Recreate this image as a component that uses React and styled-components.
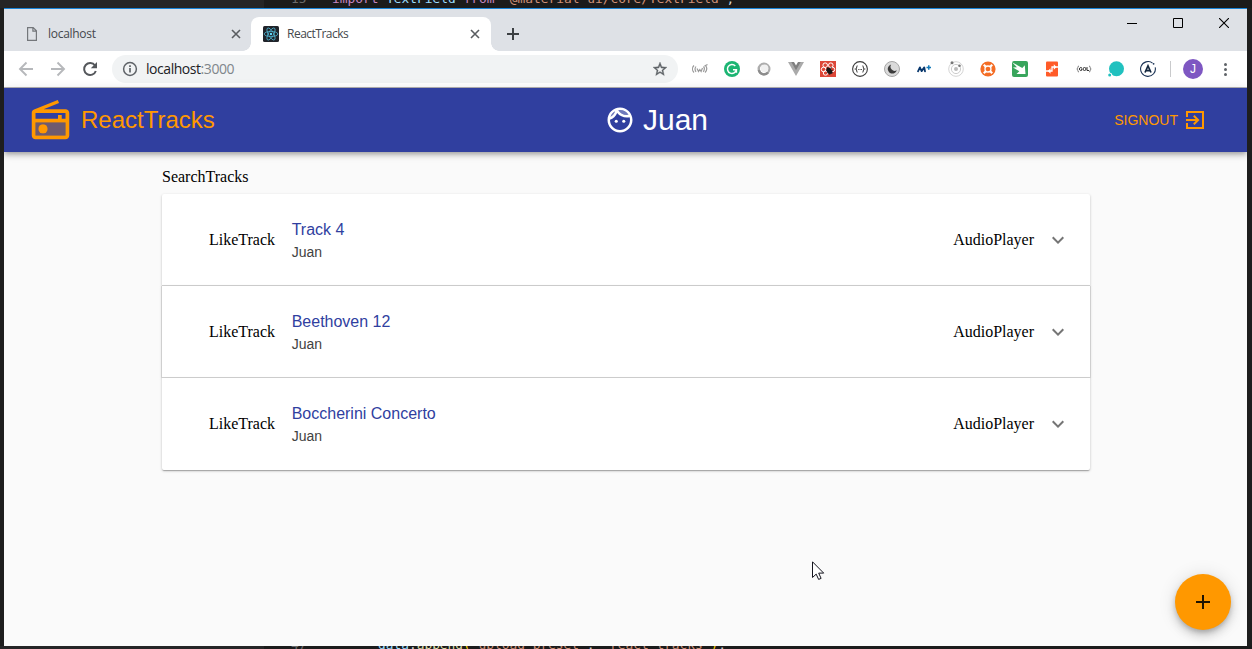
import React from "react";
import styled, { createGlobalStyle } from "styled-components";

const Global = createGlobalStyle`
  html, body { margin: 0; padding: 0; overflow: hidden; background: #1e1e1e; }
  * { box-sizing: border-box; }
  svg { display: block; flex: none; }
`;

const SANS = '"Liberation Sans", Arial, sans-serif';
const SERIF = '"Liberation Serif", "Times New Roman", serif';
const UI = '"Open Sans", "Noto Sans", sans-serif';

const Desktop = styled.div`
  width: 1252px;
  height: 649px;
  display: flex;
  flex-direction: column;
  overflow: hidden;
  background: #1e1e1e;
`;

const CodeStrip = styled.div`
  flex: none;
  height: ${(p) => p.$height}px;
  padding-left: 264px;
  display: flex;
  align-items: flex-start;
  overflow: hidden;
  background: linear-gradient(90deg, #252526 264px, #1b1b1b 264px);
`;

const CodeLine = styled.div`
  flex: none;
  display: flex;
  margin-top: ${(p) => p.$shift || 0}px;
  font: 12.85px/16px "DejaVu Sans Mono", monospace;
  white-space: pre;
`;

const LineNumber = styled.span`
  padding-left: 27px;
  width: ${(p) => p.$width}px;
  color: #6b6b6b;
`;

const Token = styled.span`
  color: ${(p) => p.$color};
`;

const BrowserWindow = styled.div`
  flex: none;
  width: 1243px;
  height: 638px;
  margin-left: 4px;
  display: flex;
  flex-direction: column;
  overflow: hidden;
  border-top: 1px solid #1883d7;
  background: #fff;
`;

const TabStrip = styled.div`
  flex: none;
  height: 42px;
  display: flex;
  background: #dee1e6;
`;

const Tab = styled.div`
  position: relative;
  width: ${(p) => (p.$active ? 240 : 247)}px;
  height: 34px;
  margin-top: 8px;
  padding: ${(p) => (p.$active ? "0 11px 0 12px" : "0 10px 0 20px")};
  display: flex;
  align-items: center;
  background: ${(p) => (p.$active ? "#fff" : "transparent")};
  border-radius: 8px 8px 0 0;
  ${(p) =>
    p.$active &&
    `&::before, &::after {
      content: "";
      position: absolute;
      bottom: 0;
      width: 8px;
      height: 8px;
    }
    &::before { left: -8px; background: radial-gradient(circle at 0 0, transparent 7.5px, #fff 8px); }
    &::after { right: -8px; background: radial-gradient(circle at 100% 0, transparent 7.5px, #fff 8px); }`}
`;

const TabTitle = styled.span`
  flex: 1;
  margin-left: 8px;
  font: 12px/16px ${UI};
  letter-spacing: ${(p) => p.$spacing}px;
  color: #45484c;
`;

const NewTab = styled.div`
  width: 44px;
  height: 34px;
  margin-top: 8px;
  display: grid;
  place-items: center;
`;

const WindowControls = styled.div`
  margin-left: auto;
  height: 27px;
  display: flex;
`;

const WindowButton = styled.div`
  width: 46px;
  display: grid;
  place-items: center;
`;

const Toolbar = styled.div`
  flex: none;
  height: 37px;
  padding-left: 14px;
  display: flex;
  align-items: center;
  background: #fff;
  border-bottom: 1px solid #b6b4b6;
`;

const NavButtons = styled.div`
  display: flex;
  gap: 16px;
  width: 94px;
`;

const AddressBar = styled.div`
  width: 566px;
  height: 28px;
  padding: 0 10px;
  display: flex;
  align-items: center;
  border-radius: 14px;
  background: #f1f3f4;
`;

const Address = styled.span`
  flex: 1;
  margin-left: 8px;
  font: 14px/20px ${UI};
  letter-spacing: -0.45px;
  color: #202124;
  span { color: #80868b; }
`;

const Extensions = styled.div`
  margin-left: 14px;
  display: flex;
  gap: 16px;
`;

const Separator = styled.div`
  width: 1px;
  height: 16px;
  margin: 0 12px 0 14px;
  background: #c9cacc;
`;

const Avatar = styled.div`
  width: 20px;
  height: 20px;
  display: grid;
  place-items: center;
  border-radius: 50%;
  background: #7e57c2;
  color: #fff;
  font: 12px/20px ${SANS};
`;

const MenuDots = styled.div`
  margin-left: 20.5px;
  display: grid;
  gap: 2px;
  i { width: 3px; height: 3px; border-radius: 50%; background: #5f6368; }
`;

const Page = styled.main`
  flex: 1;
  display: flex;
  flex-direction: column;
  position: relative;
  background: #fafafa;
`;

const AppBar = styled.header`
  flex: none;
  height: 64px;
  padding: 0 40px 0 24px;
  display: grid;
  grid-template-columns: 575px 1fr auto;
  align-items: center;
  background: #303f9f;
  box-shadow: 0 2px 4px -1px rgba(0,0,0,.2), 0 4px 5px rgba(0,0,0,.14), 0 1px 10px rgba(0,0,0,.12);
  font-family: ${SANS};
`;

const Brand = styled.div`
  display: flex;
  align-items: center;
  gap: 8px;
  font-size: 24px;
  color: #ff9800;
`;

const UserName = styled.div`
  display: flex;
  align-items: center;
  gap: 8px;
  padding-left: 2px;
  font-size: 30px;
  color: #fff;
`;

const SignOut = styled.div`
  display: flex;
  align-items: center;
  gap: 5px;
  font-size: 14px;
  color: #ff9800;
`;

const Content = styled.section`
  width: 928px;
  margin: 16px 0 0 158px;
  font: 16px/18px ${SERIF};
  color: #000;
`;

const TrackList = styled.div`
  margin-top: 8px;
`;

const TrackPanel = styled.article`
  position: relative;
  height: 92px;
  padding: 1px 20px 0 47px;
  display: flex;
  align-items: center;
  background: #fff;
  border-bottom: 1px solid ${(p) => (p.$last ? "#fff" : "#d2d2d2")};
  border-radius: ${(p) => (p.$first ? "2px 2px 0 0" : p.$last ? "0 0 2px 2px" : 0)};
  box-shadow: 0 1px 3px rgba(0,0,0,.2), 0 1px 1px rgba(0,0,0,.14), 0 2px 1px -1px rgba(0,0,0,.12)
    ${(p) => (!p.$first && !p.$last ? ", -1px 0 0 rgba(0,0,0,.08), 1px 0 0 rgba(0,0,0,.08)" : "")};
`;

const TrackText = styled.div`
  flex: 1;
  margin-left: 16.6px;
  font-family: ${SANS};
`;

const TrackTitle = styled.div`
  font-size: 16px;
  line-height: 24px;
  color: #303f9f;
`;

const TrackAuthor = styled.div`
  font-size: 14px;
  line-height: 21px;
  color: #424242;
`;

const Expand = styled.div`
  margin-left: 12px;
`;

const Fab = styled.div`
  position: absolute;
  right: 16px;
  bottom: 16px;
  width: 56px;
  height: 56px;
  display: grid;
  place-items: center;
  border-radius: 50%;
  background: #ff9800;
  box-shadow: 0 3px 5px -1px rgba(0,0,0,.2), 0 6px 10px rgba(0,0,0,.14), 0 1px 18px rgba(0,0,0,.12);
`;

const Pointer = styled.svg`
  position: absolute;
  left: 808px;
  top: 473px;
`;

const Icon = ({ size = 16, color = "currentColor", children, box = 24 }) => (
  <svg width={size} height={size} viewBox={`0 0 ${box} ${box}`} fill={color}>{children}</svg>
);

const Ext = ({ children }) => (
  <svg width="16" height="16" viewBox="0 0 16 16" fill="none">{children}</svg>
);

const CloseTab = () => (
  <svg width="10" height="10" viewBox="0 0 10 10" stroke="#5a5d61" strokeWidth="1.6"><path d="M1 1l8 8M9 1L1 9" /></svg>
);

const ReactBadge = () => (
  <svg width="16" height="16" viewBox="0 0 16 16" fill="none" stroke="#4fb3cf" strokeWidth=".8">
    <rect width="16" height="16" rx="1.5" fill="#20232a" stroke="none" />
    <ellipse cx="8" cy="8" rx="6.8" ry="2.6" />
    <ellipse cx="8" cy="8" rx="6.8" ry="2.6" transform="rotate(60 8 8)" />
    <ellipse cx="8" cy="8" rx="6.8" ry="2.6" transform="rotate(120 8 8)" />
    <circle cx="8" cy="8" r="1.2" fill="#61dafb" stroke="none" />
  </svg>
);

const ExtensionIcons = () => (
  <Extensions>
    <Ext>
      <g stroke="#9a9a9a" strokeWidth="1.2">
        <path d="M2 4.5C0 6.5 0 9.500 2 11.500M4 5.500C2.800 7 2.800 9 4 10.800" />
        <path d="M13.500 4.500C15 6.500 15 9.500 13 11.500M11.500 5.500C12.800 7 12.500 9 11.300 10.800M12.500 5l3-1.500" />
        <path d="M5 7.500l1.500 3 1.300-2 1.300 2 1.400-3.500" />
      </g>
    </Ext>
    <Ext>
      <circle cx="8" cy="8" r="8" fill="#1cb573" />
      <path d="M11.300 4.900A4.500 4.500 0 1 0 12.400 8.700H9M12.400 8.700v3" stroke="#fff" strokeWidth="1.5" />
    </Ext>
    <Ext>
      <circle cx="8" cy="8" r="5.300" stroke="#adadad" strokeWidth="2.400" />
      <path d="M2.800 9a5.300 5.300 0 0 0 9.200 2.500" stroke="#8c8c8c" strokeWidth="2.300" />
      <circle cx="8.500" cy="7.300" r="3.900" fill="#f0f0f0" />
    </Ext>
    <Ext>
      <path d="M0 1h5l3 5.300L11 1h5L8 15z" fill="#aaa" />
      <path d="M3.300 1H6l2 3.500L10 1h2.700L8 9.200z" fill="#7f7f7f" />
    </Ext>
    <Ext>
      <rect width="16" height="16" fill="#dc4738" />
      <g stroke="#fff" strokeWidth="1">
        <circle cx="5.200" cy="4.200" r="2.300" /><circle cx="10.800" cy="4.200" r="2.300" />
        <circle cx="3.600" cy="8.500" r="2.300" /><circle cx="12.400" cy="8.500" r="2.300" />
        <circle cx="5.500" cy="12" r="2.200" />
      </g>
      <ellipse cx="9.300" cy="9.800" rx="2.400" ry="3.400" transform="rotate(-35 9.300 9.800)" fill="#161616" />
      <path d="M6 9.500l6-3M7 12l6-3M9 13.500l4-2M7 6l1 2" stroke="#161616" strokeWidth=".8" />
    </Ext>
    <Ext>
      <circle cx="8" cy="8" r="7.400" stroke="#3d3d3d" strokeWidth="1.100" />
      <path d="M5.600 4.800c-1.500 0-.3 2.700-1.900 3.200 1.600.5.400 3.200 1.900 3.200M10.400 4.800c1.500 0 .3 2.700 1.900 3.200-1.600.5-.4 3.200-1.900 3.200" stroke="#444" strokeWidth="1.100" />
      <path d="M6.200 8.500h1M7.600 8.500h1M9 8.500h1" stroke="#555" />
    </Ext>
    <Ext>
      <circle cx="8" cy="8" r="7.500" fill="#dadada" stroke="#a6a6a6" />
      <path d="M7.200 3.500A4.600 4.600 0 1 0 12.800 9.200 4.100 4.100 0 0 1 7.200 3.500z" fill="#3c3c3c" />
    </Ext>
    <Ext>
      <path d="M2 10.300L3.900 6.400l1.700 3.700 2.700-3.700.7 3.900" stroke="#07366c" strokeWidth="1.800" strokeLinejoin="round" strokeLinecap="round" />
      <path d="M10.500 6.500h4.500M12.750 4.250v4.500" stroke="#1379b9" strokeWidth="1.500" />
    </Ext>
    <Ext>
      <circle cx="8" cy="8" r="7.300" stroke="#d4d4d4" /><circle cx="8" cy="8" r="4.600" stroke="#ccc" />
      <circle cx="8" cy="8" r="2" fill="#bbb" />
      <circle cx="4" cy="1.800" r="1.500" fill="#777" /><circle cx="11.500" cy="4.800" r="1.300" fill="#777" />
    </Ext>
    <Ext>
      <circle cx="8" cy="8" r="7.600" fill="#f46d25" />
      <circle cx="8" cy="8" r="3" stroke="#fff" strokeWidth="1.300" />
      <path d="M3.800 3.800l2 2M12.200 3.800l-2 2M3.800 12.200l2-2M12.200 12.200l-2-2" stroke="#fff" strokeWidth="2.200" />
    </Ext>
    <Ext>
      <rect width="16" height="16" rx="2" fill="#38a55c" />
      <path d="M0 1.200L10.300 7l2.500-2.700L13.500 13 4.500 13l2.800-2.700L1 6.500l4-.2z" fill="#fff" />
    </Ext>
    <Ext>
      <rect x="2" y=".5" width="12" height="15" rx="1" fill="#ff5b28" />
      <path d="M2 10h6V6h6" stroke="#fff" strokeWidth="1.300" />
      <path d="M6.500 7.300v5.400L3.800 10zM9.800 3.300v5.400L12.500 6z" fill="#fff" />
    </Ext>
    <Ext>
      <path d="M3 5C1 5 2.500 8 .8 8 2.500 8 1 11 3 11M13 5c2 0 .5 3 2.200 3-1.700 0-.2 3-2.200 3" stroke="#777" />
      <path d="M5.800 6.800a1.500 1.500 0 1 0 0 2.400V8H5M11 6v3.500h2" stroke="#333" />
      <circle cx="8.500" cy="8" r="1.500" stroke="#333" />
    </Ext>
    <Ext>
      <circle cx="8.500" cy="7.800" r="7.500" fill="#20c1bf" />
      <circle cx="1.900" cy="14" r="2.300" fill="#fff" /><circle cx="1.700" cy="14" r="1.500" fill="#20c1bf" />
    </Ext>
    <Ext>
      <path d="M12.500 2.100A7.400 7.400 0 1 0 15.200 6.300" stroke="#1d3557" strokeWidth="1.100" />
      <circle cx="13.600" cy="2.800" r=".9" fill="#1d3557" />
      <path d="M5 11.500L8 4.800l3 6.700M6.200 9.600h3.600" stroke="#14283f" strokeWidth="1.700" />
    </Ext>
  </Extensions>
);

const TRACKS = ["Track 4", "Beethoven 12", "Boccherini Concerto"];

export default function App() {
  return (
    <Desktop>
      <Global />
      <CodeStrip $height={8}>
        <CodeLine $shift={-9}>
          <LineNumber $width={68}>15</LineNumber>
          <Token $color="#c586c0">import </Token>
          <Token $color="#9cdcfe">TextField </Token>
          <Token $color="#c586c0">from </Token>
          <Token $color="#ce9178">'@material-ui/core/TextField'</Token>
          <Token $color="#d4d4d4">;</Token>
        </CodeLine>
      </CodeStrip>
      <BrowserWindow>
        <TabStrip>
          <Tab>
            <svg width="16" height="16" viewBox="0 0 16 16" fill="none" stroke="#74777b" strokeWidth="1.200">
              <path d="M3.600 1.600h5.600l3.200 3.200v9.600H3.600zM8.900 1.600v3.500h3.500" />
            </svg>
            <TabTitle $spacing={-0.28}>localhost</TabTitle>
            <CloseTab />
          </Tab>
          <Tab $active>
            <ReactBadge />
            <TabTitle $spacing={-0.5}>ReactTracks</TabTitle>
            <CloseTab />
          </Tab>
          <NewTab>
            <svg width="12" height="12" viewBox="0 0 12 12" stroke="#3c4043" strokeWidth="2"><path d="M6 0v12M0 6h12" /></svg>
          </NewTab>
          <WindowControls>
            <WindowButton><svg width="10" height="10"><path d="M0 5.500h10" stroke="#000" /></svg></WindowButton>
            <WindowButton><svg width="10" height="10"><path d="M.5.500h9v9h-9z" fill="none" stroke="#000" /></svg></WindowButton>
            <WindowButton><svg width="10" height="10"><path d="M0 0l10 10M10 0L0 10" stroke="#000" strokeWidth="1.100" /></svg></WindowButton>
          </WindowControls>
        </TabStrip>
        <Toolbar>
          <NavButtons>
            <svg width="16" height="16" fill="none" stroke="#b6b8bb" strokeWidth="1.900"><path d="M15 8H2M8.500 1.500L2 8l6.500 6.500" /></svg>
            <svg width="16" height="16" fill="none" stroke="#b6b8bb" strokeWidth="1.900"><path d="M1 8h13M7.500 1.500L14 8l-6.500 6.500" /></svg>
            <svg width="16" height="16" fill="none" stroke="#54575b" strokeWidth="2">
              <path d="M13 4.500A6 6 0 1 0 13.800 10" /><path d="M15 1v6.200H8.800z" fill="#54575b" stroke="none" />
            </svg>
          </NavButtons>
          <AddressBar>
            <svg width="16" height="16" fill="none" stroke="#5f6368" strokeWidth="1.500">
              <circle cx="8" cy="8" r="6.400" /><path d="M8 7v4.500M8 4.300v1.600" strokeWidth="1.700" />
            </svg>
            <Address>localhost<span>:3000</span></Address>
            <Icon size={16} color="#5f6368">
              <path d="M22.500 9.240l-7.690-.66L12 1.500 9.190 8.590 1.500 9.240l5.820 5.030L5.580 21.800 12 17.770l6.430 4.030-1.740-7.530zM12 15.900l-3.760 2.270 1-4.280-3.320-2.880 4.380-.38L12 6.600l1.710 4.040 4.380.38-3.320 2.880 1 4.280z" stroke="#5f6368" strokeWidth=".5" />
            </Icon>
          </AddressBar>
          <ExtensionIcons />
          <Separator />
          <Avatar>J</Avatar>
          <MenuDots><i /><i /><i /></MenuDots>
        </Toolbar>
        <Page>
          <AppBar>
            <Brand>
              <Icon size={45}>
                <path opacity=".3" d="M4 20h16v-7H4v7zm4-6c1.380 0 2.500 1.120 2.500 2.500S9.380 19 8 19s-2.500-1.120-2.500-2.500S6.620 14 8 14z" />
                <path d="M2 20c0 1.100.9 2 2 2h16c1.110 0 2-.9 2-2V8c0-1.110-.89-2-2-2H8.300l8.260-3.340L15.880 1 3.240 6.150C2.510 6.430 2 7.170 2 8v12zM4 8h16v3h-2V9h-2v2H4V8zm0 5h16v7H4v-7z" />
                <circle cx="8" cy="16.480" r="2.500" />
              </Icon>
              ReactTracks
            </Brand>
            <UserName>
              <Icon size={30}>
                <path opacity=".3" d="M17.500 8c.46 0 .91-.05 1.340-.12C17.440 5.560 14.900 4 12 4c-.46 0-.91.05-1.340.12C12.060 6.440 14.600 8 17.500 8zM8.080 5.030C6.370 6 5.050 7.580 4.420 9.470c1.710-.97 3.030-2.550 3.660-4.440z" />
                <path d="M12 2C6.480 2 2 6.480 2 12s4.480 10 10 10 10-4.480 10-10S17.520 2 12 2zm0 2c2.900 0 5.440 1.560 6.840 3.880-.43.07-.88.12-1.340.12-2.900 0-5.440-1.560-6.840-3.880.43-.07.88-.12 1.340-.12zM8.080 5.030C7.450 6.920 6.130 8.500 4.420 9.470 5.050 7.580 6.370 6 8.080 5.030zM12 20c-4.410 0-8-3.590-8-8 0-.05.01-.1 0-.14 2.600-.98 4.690-2.990 5.740-5.550C11.580 8.560 14.370 10 17.500 10c.75 0 1.470-.09 2.170-.24.21.71.33 1.460.33 2.240 0 4.410-3.590 8-8 8z" />
                <circle cx="9" cy="13" r="1.250" /><circle cx="15" cy="13" r="1.250" />
              </Icon>
              Juan
            </UserName>
            <SignOut>
              SIGNOUT
              <Icon size={24}>
                <path d="M10.090 15.590L11.500 17l5-5-5-5-1.410 1.410L12.670 11H3v2h9.670l-2.580 2.590zM21 3H3v6h2V5h14v14H5v-4H3v6h18z" />
              </Icon>
            </SignOut>
          </AppBar>
          <Content>
            SearchTracks
            <TrackList>
              {TRACKS.map((title, i) => (
                <TrackPanel key={title} $first={i === 0} $last={i === TRACKS.length - 1}>
                  LikeTrack
                  <TrackText>
                    <TrackTitle>{title}</TrackTitle>
                    <TrackAuthor>Juan</TrackAuthor>
                  </TrackText>
                  AudioPlayer
                  <Expand>
                    <Icon size={24} color="#757575"><path d="M7.410 8.590L12 13.170l4.590-4.580L18 10l-6 6-6-6z" /></Icon>
                  </Expand>
                </TrackPanel>
              ))}
            </TrackList>
          </Content>
          <Fab>
            <Icon size={24} color="#1f1300"><path d="M19 13h-6v6h-2v-6H5v-2h6V5h2v6h6z" /></Icon>
          </Fab>
          <Pointer width="13" height="20" viewBox="0 0 13 20">
            <path d="M.5.800v15.700l3.700-3.400 2.400 5.300 2.500-1-2.400-5.300h5z" fill="#fff" stroke="#14141e" />
          </Pointer>
        </Page>
      </BrowserWindow>
      <CodeStrip $height={3}>
        <CodeLine $shift={-9}>
          <LineNumber $width={114}>47</LineNumber>
          <Token $color="#9cdcfe">data</Token>
          <Token $color="#d4d4d4">.</Token>
          <Token $color="#dcdcaa">append</Token>
          <Token $color="#ffd700">(</Token>
          <Token $color="#ce9178">"upload_preset"</Token>
          <Token $color="#d4d4d4">, </Token>
          <Token $color="#ce9178">"react-tracks"</Token>
          <Token $color="#ffd700">)</Token>
          <Token $color="#d4d4d4">;</Token>
        </CodeLine>
      </CodeStrip>
    </Desktop>
  );
}
